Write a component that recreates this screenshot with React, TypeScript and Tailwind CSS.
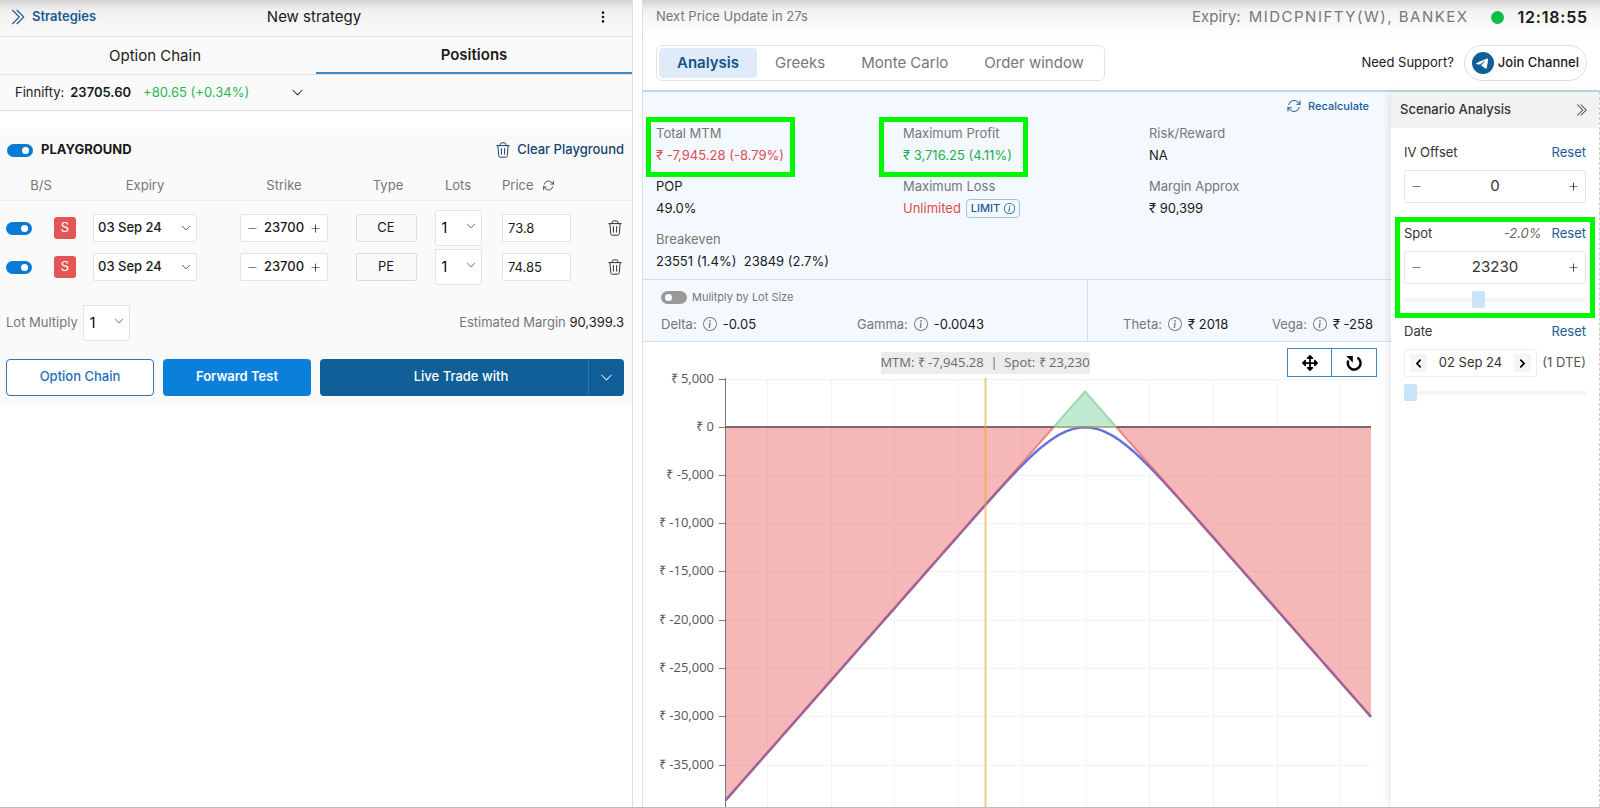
import { useState } from "react"
import {
  BsChevronDoubleRight,
  BsChevronDown,
  BsChevronLeft,
  BsChevronRight,
  BsDashLg,
  BsInfoCircle,
  BsPlusLg,
  BsTelegram,
  BsThreeDotsVertical,
} from "react-icons/bs"
import { FaArrowsAlt } from "react-icons/fa"
import { HiOutlineArrowPath } from "react-icons/hi2"

const legs = [
  { id: 1, expiry: "03 Sep 24", strike: "23700", type: "CE", price: "73.8" },
  { id: 2, expiry: "03 Sep 24", strike: "23700", type: "PE", price: "74.85" },
]

const tabs = ["Analysis", "Greeks", "Monte Carlo", "Order window"]

function TrashIcon({ className = "" }: { className?: string }) {
  return (
    <svg viewBox="0 0 16 16" fill="none" stroke="currentColor" strokeLinecap="round" strokeLinejoin="round" className={`h-4 w-4 ${className}`}>
      <path d="M1.8 3.6h12.4M5.2 3.4V2.2c0-.8.5-1.3 1.3-1.3h3c.8 0 1.3.5 1.3 1.3v1.2" />
      <path d="M2.9 3.8l.8 9.8c.1 1 .7 1.6 1.7 1.6h5.2c1 0 1.6-.6 1.7-1.6l.8-9.8M6.4 6.6v5.6M9.6 6.6v5.6" />
    </svg>
  )
}

function Toggle({ label, defaultChecked = false }: { label: string; defaultChecked?: boolean }) {
  return (
    <input
      type="checkbox"
      aria-label={label}
      defaultChecked={defaultChecked}
      className="relative block h-[13px] w-[26px] shrink-0 appearance-none rounded-full bg-[#999] before:absolute before:left-1 before:top-[3px] before:h-[7px] before:w-[7px] before:rounded-full before:bg-white checked:bg-[#0a7bd4] checked:before:left-[15px]"
    />
  )
}

function LotSelect({ label, id }: { label: string; id?: string }) {
  return (
    <div className="relative inline-block">
      <select
        id={id}
        aria-label={label}
        defaultValue="1"
        className="block h-9 w-[47px] appearance-none rounded-xs border border-[#e4e4e4] bg-white pl-1.5 text-sm text-black"
      >
        <option>1</option>
        <option>2</option>
        <option>3</option>
      </select>
      <BsChevronDown className="pointer-events-none absolute right-1.5 top-[11px] text-[10px] text-[#333]" />
    </div>
  )
}

function Metric({ label, value, color = "text-[#1a1a1a]", labelColor = "text-[#777]", marker = "", children }: any) {
  return (
    <div className="relative">
      {marker && <div className={`pointer-events-none absolute -top-[5px] h-[60px] w-[149px] border-5 border-[#00f800] ${marker}`} />}
      <p className={labelColor}>{label}</p>
      <div className={`flex items-center gap-[5px] ${color}`}>
        <span className="whitespace-pre">{value}</span>
        {children}
      </div>
    </div>
  )
}

function Greek({ label, value }: { label: string; value: string }) {
  return (
    <div className="flex items-center gap-1.5">
      <span className="text-[#777]">{label}</span>
      <BsInfoCircle className="text-sm text-[#777]" />
      <span>{value}</span>
    </div>
  )
}

function Stepper({ label, value }: { label: string; value: string }) {
  return (
    <div className="flex h-[33px] items-center rounded-xs border border-[#e6e6e6] bg-white px-1.5">
      <button aria-label={`Decrease ${label}`}>
        <BsDashLg className="text-[11px] text-black" />
      </button>
      <input aria-label={label} defaultValue={value} className="w-full min-w-0 bg-transparent text-center text-[15px]" />
      <button aria-label={`Increase ${label}`}>
        <BsPlusLg className="text-[11px] text-black" />
      </button>
    </div>
  )
}

function Slider({ label, value }: { label: string; value: number }) {
  return (
    <input
      type="range"
      aria-label={label}
      defaultValue={value}
      className="block h-[17px] w-full appearance-none bg-transparent [&::-webkit-slider-runnable-track]:h-1 [&::-webkit-slider-runnable-track]:bg-[#f5f5f5] [&::-webkit-slider-thumb]:-mt-[7px] [&::-webkit-slider-thumb]:h-[17px] [&::-webkit-slider-thumb]:w-[13px] [&::-webkit-slider-thumb]:appearance-none [&::-webkit-slider-thumb]:rounded-xs [&::-webkit-slider-thumb]:bg-[#c9e3f8]"
    />
  )
}

// chart geometry
const ZERO_Y = 85
const PEAK = { x: 442, y: 49.5 }
const SLOPE = 1.1375
const SIGMA = 39.5
const LEFT = 82.5
const RIGHT = 728

function cdf(z: number) {
  const t = 1 / (1 + 0.2316419 * Math.abs(z))
  const tail =
    (Math.exp((-z * z) / 2) / Math.sqrt(2 * Math.PI)) *
    t * (0.31938153 + t * (-0.356563782 + t * (1.781477937 + t * (-1.821255978 + t * 1.330274429))))
  return z >= 0 ? 1 - tail : tail
}

// value of the short straddle before expiry
function todayY(x: number) {
  const d = x - PEAK.x
  const z = d / SIGMA
  const pdf = Math.exp((-z * z) / 2) / Math.sqrt(2 * Math.PI)
  return PEAK.y + SLOPE * (d * (2 * cdf(z) - 1) + 2 * SIGMA * pdf)
}

const payoffY = (x: number) => PEAK.y + SLOPE * Math.abs(x - PEAK.x)
const half = (ZERO_Y - PEAK.y) / SLOPE

const xs: number[] = []
for (let x = LEFT; x < RIGHT; x += 4) xs.push(x)
xs.push(RIGHT)
const todayPath = "M" + xs.map((x) => `${x},${todayY(x).toFixed(2)}`).join("L")

const yTicks = [
  { label: "₹ 5,000", y: 37 },
  { label: "₹ 0", y: 85 },
  { label: "₹ -5,000", y: 133 },
  { label: "₹ -10,000", y: 181 },
  { label: "₹ -15,000", y: 229 },
  { label: "₹ -20,000", y: 278 },
  { label: "₹ -25,000", y: 326 },
  { label: "₹ -30,000", y: 374 },
  { label: "₹ -35,000", y: 423 },
]
const xTicks = [124, 188, 251, 315, 379, 443, 506, 570, 634, 697]

function PayoffChart() {
  return (
    <svg viewBox="0 0 748 480" className="block w-full font-['Open_Sans',sans-serif]" role="img" aria-label="Payoff chart">
      {yTicks.map((t) => (
        <line key={t.y} x1={LEFT} x2={RIGHT} y1={t.y + 0.5} y2={t.y + 0.5} stroke="#f3f3f3" />
      ))}
      {xTicks.map((x) => (
        <line key={x} x1={x + 0.5} x2={x + 0.5} y1={37} y2={480} stroke="#f3f3f3" />
      ))}
      <path d={`M${LEFT},${ZERO_Y}L${PEAK.x - half},${ZERO_Y}L${LEFT},${payoffY(LEFT)}Z`} fill="#ea5455" fillOpacity="0.42" />
      <path d={`M${RIGHT},${ZERO_Y}L${PEAK.x + half},${ZERO_Y}L${RIGHT},${payoffY(RIGHT)}Z`} fill="#ea5455" fillOpacity="0.42" />
      <path d={`M${PEAK.x - half},${ZERO_Y}L${PEAK.x},${PEAK.y}L${PEAK.x + half},${ZERO_Y}Z`} fill="#c0ebd1" />
      <path d={todayPath} fill="none" stroke="#6670dc" strokeWidth="2.5" />
      <path d={`M${LEFT},${payoffY(LEFT)}L${PEAK.x - half},${ZERO_Y}`} stroke="#e3504f" strokeOpacity="0.6" strokeWidth="2" />
      <path d={`M${PEAK.x + half},${ZERO_Y}L${RIGHT},${payoffY(RIGHT)}`} stroke="#e3504f" strokeOpacity="0.6" strokeWidth="2" />
      <path d={`M${PEAK.x - half},${ZERO_Y}L${PEAK.x},${PEAK.y}L${PEAK.x + half},${ZERO_Y}`} fill="none" stroke="#9fd8b6" strokeWidth="2" />
      <line x1={LEFT} x2={PEAK.x - half} y1={ZERO_Y} y2={ZERO_Y} stroke="#7f6668" strokeWidth="2" />
      <line x1={PEAK.x - half} x2={PEAK.x + half} y1={ZERO_Y} y2={ZERO_Y} stroke="#a09a6c" strokeWidth="1.5" />
      <line x1={PEAK.x + half} x2={RIGHT} y1={ZERO_Y} y2={ZERO_Y} stroke="#7f6668" strokeWidth="2" />
      <line x1={342.5} x2={342.5} y1={36} y2={480} stroke="#f0a830" strokeOpacity="0.6" strokeWidth="2" />
      <line x1={LEFT} x2={LEFT} y1={36} y2={480} stroke="#777" />
      {yTicks.map((t) => (
        <g key={t.label}>
          <line x1={76} x2={LEFT} y1={t.y + 0.5} y2={t.y + 0.5} stroke="#777" />
          <text x={71} y={t.y + 4} textAnchor="end" fontSize="13" fill="#555">
            {t.label}
          </text>
        </g>
      ))}
      <rect x={238} y={10} width={209} height={22} fill="#ececec" />
      <text x={342} y={25} textAnchor="middle" fontSize="13" fill="#6a6a6a" className="whitespace-pre">
        {"MTM: ₹ -7,945.28  |  Spot: ₹ 23,230"}
      </text>
    </svg>
  )
}

function StrategyPanel() {
  return (
    <section className="border-r border-[#dedede] text-[13px]">
      <div className="bg-[#fafafa]">
        <header className="flex h-[37px] items-center justify-between border-b border-[#e2e2e2] bg-linear-to-b from-[#d3d3d3] via-[#f1f1f1] via-30% to-[#fafafa] pb-0.5 pl-2 pr-3">
          <a href="#" className="flex flex-1 items-center gap-1.5 font-semibold text-[#1a5894]">
            <BsChevronDoubleRight className="text-lg" />
            Strategies
          </a>
          <h1 className="text-[15px]">New strategy</h1>
          <div className="flex flex-1 justify-end">
            <button aria-label="More" className="mr-2.5">
              <BsThreeDotsVertical className="text-sm" />
            </button>
          </div>
        </header>
        <nav className="grid h-[38px] grid-cols-2 border-b border-[#e2e2e2] text-[15px]">
          <button className="pr-1.5 pt-0.5">Option Chain</button>
          <button className="border-b-2 border-[#3a87c4] pt-0.5 font-semibold">Positions</button>
        </nav>
        <div className="flex h-9 items-center border-b border-[#e2e2e2] px-[15px]">
          <span>Finnifty:</span>
          <span className="ml-1.5 font-semibold">23705.60</span>
          <span className="ml-3 text-[#28b84c]">+80.65 (+0.34%)</span>
          <button className="ml-[42px]" aria-label="Show indices">
            <BsChevronDown className="text-[13px]" />
          </button>
        </div>
      </div>

      <div className="mt-[18px] bg-[#fafafa] pb-2">
        <div className="flex h-[42px] items-center justify-between pl-[7px] pr-2">
          <div className="flex items-center gap-2">
            <Toggle label="Playground" defaultChecked />
            <h2 className="font-bold">PLAYGROUND</h2>
          </div>
          <button className="flex items-center gap-1.5 font-medium text-[#15446f]">
            <TrashIcon />
            Clear Playground
          </button>
        </div>

        <table className="w-full table-fixed">
          <colgroup>
            <col className="w-[72px]" />
            <col className="w-[146px]" />
            <col className="w-[132px]" />
            <col className="w-[76px]" />
            <col className="w-[64px]" />
            <col className="w-[93px]" />
            <col />
          </colgroup>
          <thead>
            <tr className="h-[29px] border-b border-[#ebebeb] text-[#777]">
              <th className="pl-2.5 font-normal">B/S</th>
              <th className="font-normal">Expiry</th>
              <th className="font-normal">Strike</th>
              <th className="font-normal">Type</th>
              <th className="font-normal">Lots</th>
              <th className="pl-3 text-left font-normal">
                <span className="flex items-center gap-2">
                  Price <HiOutlineArrowPath className="text-[13px] text-[#333]" />
                </span>
              </th>
              <th></th>
            </tr>
          </thead>
          <tbody className="before:block before:h-2 before:content-['']">
            {legs.map((leg) => (
              <tr key={leg.id} className="h-[39px]">
                <td>
                  <div className="flex items-center gap-[22px] pl-1.5">
                    <Toggle label={`${leg.type} leg`} defaultChecked />
                    <button className="h-[22px] w-[22px] shrink-0 rounded-[3px] bg-[#e45656] text-white">S</button>
                  </div>
                </td>
                <td className="text-center">
                  <div className="relative inline-block text-left align-middle">
                    <select
                      aria-label="Expiry"
                      className="block h-7 w-[104px] appearance-none rounded-xs border border-[#e4e4e4] bg-white pl-1 font-medium"
                    >
                      <option>{leg.expiry}</option>
                    </select>
                    <BsChevronDown className="pointer-events-none absolute right-1.5 top-[9px] text-[10px]" />
                  </div>
                </td>
                <td>
                  <div className="mx-auto flex h-7 w-[88px] items-center rounded-xs border border-[#e4e4e4] bg-white px-1.5">
                    <button aria-label="Lower strike" className="text-black">
                      <BsDashLg className="text-[11px]" />
                    </button>
                    <input aria-label="Strike" defaultValue={leg.strike} className="w-full min-w-0 bg-transparent text-center font-medium" />
                    <button aria-label="Higher strike" className="text-black">
                      <BsPlusLg className="text-[11px]" />
                    </button>
                  </div>
                </td>
                <td className="pr-1 text-center">
                  <button className="h-7 w-[61px] rounded-xs border border-[#dcdcdc]">{leg.type}</button>
                </td>
                <td className="text-center align-middle">
                  <div className="flex justify-center">
                    <LotSelect label="Lots" />
                  </div>
                </td>
                <td className="pl-3">
                  <input
                    aria-label="Price"
                    defaultValue={leg.price}
                    className="block h-7 w-[69px] rounded-xs border border-[#e4e4e4] bg-white px-[5px]"
                  />
                </td>
                <td>
                  <button aria-label="Delete leg" className="ml-6 block text-[#333]">
                    <TrashIcon />
                  </button>
                </td>
              </tr>
            ))}
          </tbody>
        </table>

        <div className="mt-[18px] flex items-center justify-between pl-1.5 pr-2 text-[#777]">
          <div className="flex items-center gap-[5px]">
            <label htmlFor="lot-multiply">Lot Multiply</label>
            <LotSelect id="lot-multiply" label="Lot Multiply" />
          </div>
          <p>
            Estimated Margin <span className="text-[#1a1a1a]">90,399.3</span>
          </p>
        </div>

        <div className="mt-[18px] grid grid-cols-[148fr_148fr_304fr] gap-[9px] pl-1.5 pr-2 font-medium">
          <button className="h-[37px] rounded-sm border border-[#2b77b8] bg-white text-[#1b70b8]">Option Chain</button>
          <button className="rounded-sm bg-[#0a80da] font-semibold text-white">Forward Test</button>
          <div className="flex rounded-sm bg-[#115f98] text-white">
            <button className="flex-1 pl-3.5">Live Trade with</button>
            <button className="flex w-9 items-center justify-center border-l border-[#2f76aa]" aria-label="Choose broker">
              <BsChevronDown className="text-[13px]" />
            </button>
          </div>
        </div>
      </div>
    </section>
  )
}

function ScenarioPanel() {
  return (
    <aside className="relative w-[209px] shrink-0 border-r border-dashed border-r-[#ccc] bg-white text-[13px] shadow-[-2px_0_8px_rgba(0,0,0,0.1)]">
      <div className="flex h-9 items-center justify-between bg-[#f2f2f2] pl-[9px] pr-[11px] font-medium text-[#333]">
        <h2>Scenario Analysis</h2>
        <button aria-label="Collapse">
          <BsChevronDoubleRight className="text-sm" />
        </button>
      </div>
      <div className="px-[13px] pt-[15px] text-[#333]">
        <div className="flex h-5 justify-between">
          <span>IV Offset</span>
          <button className="text-[#1a5a96]">Reset</button>
        </div>
        <div className="pt-[7px]">
          <Stepper label="IV Offset" value="0" />
        </div>

        <div className="relative mt-[21px]">
          <div className="pointer-events-none absolute -left-[9px] -right-[9px] -top-[7px] h-[101px] border-5 border-[#00f800]" />
          <div className="flex h-5 items-center">
            <span className="flex-1">Spot</span>
            <em className="mr-2.5 text-[#666]">-2.0%</em>
            <button className="text-[#1a5a96]">Reset</button>
          </div>
          <div className="py-[7px]">
            <Stepper label="Spot" value="23230" />
          </div>
          <Slider label="Spot" value={40} />
        </div>

        <div className="mt-3.5 flex h-5 items-center justify-between">
          <span>Date</span>
          <button className="text-[#1a5a96]">Reset</button>
        </div>
        <div className="flex items-center justify-between py-[7px]">
          <div className="flex h-7 w-[133px] items-center justify-between rounded-xs border border-[#eee] px-[5px]">
            <button aria-label="Previous day" className="flex h-[18px] w-[17px] items-center justify-center bg-[#f5f5f5] text-black">
              <BsChevronLeft className="stroke-2 text-[9px]" />
            </button>
            <span>02 Sep 24</span>
            <button aria-label="Next day" className="flex h-[18px] w-[17px] items-center justify-center bg-[#f5f5f5] text-black">
              <BsChevronRight className="stroke-2 text-[9px]" />
            </button>
          </div>
          <span className="text-[#555]">(1 DTE)</span>
        </div>
        <Slider label="Date" value={0} />
      </div>
    </aside>
  )
}

export default function App() {
  const [tab, setTab] = useState("Analysis")

  return (
    <main className="grid h-screen grid-cols-[633fr_958fr] gap-[9px] overflow-hidden border-b border-[#bbb] bg-white font-['Inter',sans-serif] text-[#1a1a1a]">
      <StrategyPanel />

      <section className="flex min-h-0 min-w-0 flex-col border-l border-[#dedede] text-[13px]">
        <header className="flex h-9 shrink-0 items-center justify-between bg-linear-to-b from-[#d3d3d3] via-[#f3f3f3] via-30% to-white pb-0.5 pl-[13px] pr-3 text-[#777]">
          <p>Next Price Update in 27s</p>
          <div className="flex items-center text-[15px]">
            <span>Expiry:</span>
            <span className="ml-2 tracking-widest">MIDCPNIFTY(W), BANKEX</span>
            <span className="ml-[22px] h-[13px] w-[13px] rounded-full bg-[#0fbd4b]" />
            <time className="ml-3.5 text-base font-semibold tracking-wider text-[#1a1a1a]">12:18:55</time>
          </div>
        </header>

        <div className="flex shrink-0 items-center justify-between border-b-2 border-[#bfd9ea] px-[13px] py-[9px]">
          <nav className="flex h-9 rounded-md border border-[#e4e4e4] p-0.5 text-[15px]">
            {tabs.map((t) => (
              <button
                key={t}
                onClick={() => setTab(t)}
                className={`rounded-sm px-[18px] ${t === tab ? "bg-[#dfebf8] font-semibold text-[#135489]" : "text-[#777]"}`}
              >
                {t}
              </button>
            ))}
          </nav>
          <div className="flex items-center gap-2.5">
            <span>Need Support?</span>
            <a href="#" className="flex h-9 items-center gap-1 rounded-full border border-[#dedede] px-[7px] font-medium">
              <BsTelegram className="text-[22px] text-[#115f98]" />
              Join Channel
            </a>
          </div>
        </div>

        <div className="flex min-h-0 flex-1">
          <div className="flex min-w-0 flex-1 flex-col">
            <div className="bg-[#f3f9fe] pb-[7px] pl-[13px]">
              <div className="flex justify-end pr-[22px] pt-[5px]">
                <button className="flex h-[18px] items-center gap-1.5 text-[11px] font-medium text-[#1a5a96]">
                  <HiOutlineArrowPath className="text-base" />
                  Recalculate
                </button>
              </div>
              <div className="mt-[7px] grid grid-cols-[247fr_246fr_242fr] gap-y-[9px] leading-[22px]">
                <Metric marker="-left-2.5" label="Total MTM" value="₹ -7,945.28 (-8.79%)" color="text-[#dd4b50]" />
                <Metric marker="-left-6" label="Maximum Profit" value="₹ 3,716.25 (4.11%)" color="text-[#22ad4c]" />
                <Metric label="Risk/Reward" value="NA" />
                <Metric label="POP" value="49.0%" labelColor="text-[#1a1a1a]" />
                <Metric label="Maximum Loss" value="Unlimited" color="text-[#dd4b50]">
                  <button className="flex h-[19px] items-center gap-1 rounded-sm border border-[#a9bfd3] px-1 text-[11px] font-medium text-[#1a5a96]">
                    LIMIT <BsInfoCircle className="text-[11px]" />
                  </button>
                </Metric>
                <Metric label="Margin Approx" value="₹ 90,399" />
                <Metric label="Breakeven" value="23551 (1.4%)  23849 (2.7%)" />
              </div>
            </div>

            <div className="grid h-[63px] shrink-0 grid-cols-[444fr_304fr] border-y border-[#d6e0e8] bg-[#f3f9fe]">
              <div className="flex flex-col justify-between px-[18px] pb-[7px] pt-2.5">
                <label className="flex items-center gap-[5px] text-[11px] leading-[14px] text-[#777]">
                  <Toggle label="Mulitply by Lot Size" />
                  Mulitply by Lot Size
                </label>
                <div className="grid grid-cols-[196fr_212fr]">
                  <Greek label="Delta:" value="-0.05" />
                  <Greek label="Gamma:" value="-0.0043" />
                </div>
              </div>
              <div className="flex items-end justify-between border-l border-[#d6e0e8] pb-[7px] pl-[35px] pr-[18px]">
                <Greek label="Theta:" value="₹ 2018" />
                <Greek label="Vega:" value="₹ -258" />
              </div>
            </div>

            <div className="relative min-h-0 flex-1 overflow-hidden">
              <PayoffChart />
              <div className="absolute right-3.5 top-1.5 flex border border-[#3a87c4] bg-white">
                <button aria-label="Pan" className="flex h-[27px] w-11 items-center justify-center border-r border-[#3a87c4] text-black">
                  <FaArrowsAlt className="text-base" />
                </button>
                <button aria-label="Reset zoom" className="flex h-[27px] w-11 items-center justify-center text-black">
                  <svg viewBox="0 0 18 18" className="h-[18px] w-[18px]">
                    <path d="M3.4 6.4A6.4 6.4 0 1 0 12.4 3.6" fill="none" stroke="currentColor" strokeWidth="2.4" />
                    <path d="M1.2 2h6.6v6.6z" fill="currentColor" />
                  </svg>
                </button>
              </div>
            </div>
          </div>

          <ScenarioPanel />
        </div>
      </section>
    </main>
  )
}
